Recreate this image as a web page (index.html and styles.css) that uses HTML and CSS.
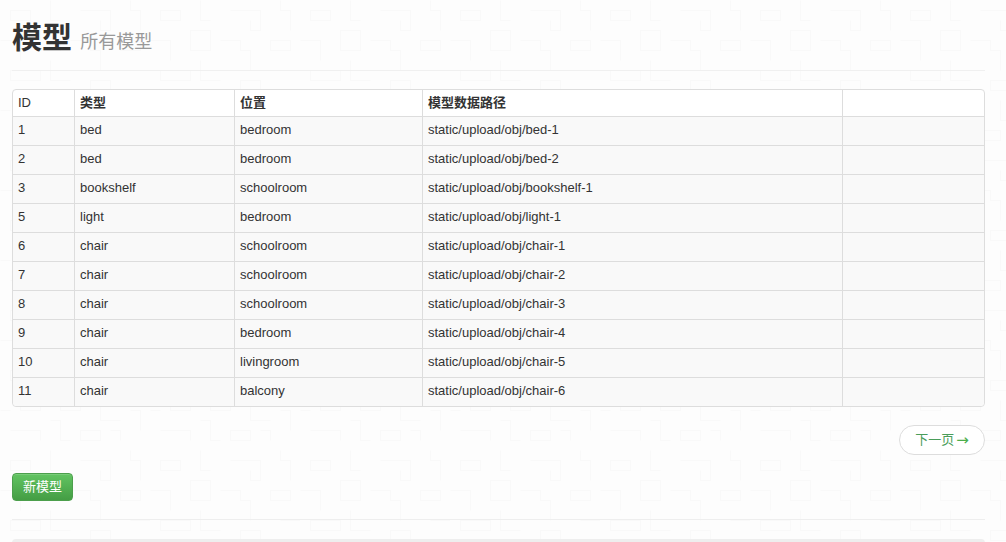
FILE: index.html
```html
<!DOCTYPE html>
<html lang="zh">
<head>
<meta charset="utf-8">
<title>模型</title>
<link rel="stylesheet" href="styles.css">
</head>
<body>
<main class="page">
  <header class="page-header">
    <h1>模型 <small>所有模型</small></h1>
  </header>
  <table class="models">
    <thead>
      <tr><th class="c-id">ID</th><th class="c-type">类型</th><th class="c-loc">位置</th><th class="c-path">模型数据路径</th><th class="c-act"></th></tr>
    </thead>
    <tbody>
      <tr><td>1</td><td>bed</td><td>bedroom</td><td>static/upload/obj/bed-1</td><td></td></tr>
      <tr><td>2</td><td>bed</td><td>bedroom</td><td>static/upload/obj/bed-2</td><td></td></tr>
      <tr><td>3</td><td>bookshelf</td><td>schoolroom</td><td>static/upload/obj/bookshelf-1</td><td></td></tr>
      <tr><td>5</td><td>light</td><td>bedroom</td><td>static/upload/obj/light-1</td><td></td></tr>
      <tr><td>6</td><td>chair</td><td>schoolroom</td><td>static/upload/obj/chair-1</td><td></td></tr>
      <tr><td>7</td><td>chair</td><td>schoolroom</td><td>static/upload/obj/chair-2</td><td></td></tr>
      <tr><td>8</td><td>chair</td><td>schoolroom</td><td>static/upload/obj/chair-3</td><td></td></tr>
      <tr><td>9</td><td>chair</td><td>bedroom</td><td>static/upload/obj/chair-4</td><td></td></tr>
      <tr><td>10</td><td>chair</td><td>livingroom</td><td>static/upload/obj/chair-5</td><td></td></tr>
      <tr><td>11</td><td>chair</td><td>balcony</td><td>static/upload/obj/chair-6</td><td></td></tr>
    </tbody>
  </table>
  <nav class="pager"><a class="next" href="#">下一页<span class="arrow">→</span></a></nav>
  <div class="actions"><a class="btn" href="#">新模型</a></div>
  <hr class="rule">
  <div class="footer-bar"></div>
</main>
</body>
</html>
```
FILE: styles.css
```css
* { box-sizing: border-box; }
html, body { height: 100%; }
body {
  margin: 0;
  overflow: hidden;
  color: #333;
  font: 13px/20px "Liberation Sans", "Noto Sans CJK SC", sans-serif;
  background-color: #fdfdfd;
  background-image: url("data:image/svg+xml,%3Csvg xmlns='http://www.w3.org/2000/svg' width='150' height='150' fill='none' stroke='%23f9f9f9'%3E%3Cpath d='M10.5 10.5h20v10h-20zM50.5 .5v20h10M80.5 10.5h30v20h-10v-10M130.5 .5v10h10v20M.5 40.5h20v20M40.5 30.5h20v20h-20zM70.5 40.5h20v10h10v20M120.5 40.5h20v10h-20zM10.5 70.5h30v10h-30zM50.5 60.5v20h20M90.5 80.5h20v10h-20zM130.5 70.5h20v20M20.5 90.5v20h20v-10M60.5 90.5h20v20h-20zM100.5 100.5v20h20M130.5 110.5h10v20M.5 110.5h10M10.5 130.5h30v10M50.5 120.5h10v20h10M80.5 130.5h20v10h-20zM110.5 130.5h10v10'/%3E%3C/svg%3E");
}
.page { padding: 0 21px 0 12px; }
.page-header {
  height: 71px;
  padding-top: 13px;
  border-bottom: 1px solid #f0f0f0;
}
h1 {
  margin: 0;
  font-size: 30px;
  line-height: 50px;
  font-weight: bold;
  color: #333;
}
h1 small {
  font-size: 18px;
  font-weight: normal;
  color: #999;
}
.models {
  width: 973px;
  margin-top: 18px;
  table-layout: fixed;
  border-collapse: separate;
  border-spacing: 0;
  background: #fff;
  border: 1px solid #ddd;
  border-radius: 4px;
}
.c-id { width: 61px; }
.c-type { width: 160px; }
.c-loc { width: 188px; }
.c-path { width: 420px; }
th, td {
  padding: 0 5px;
  text-align: left;
  border-left: 1px solid #ddd;
  border-top: 1px solid #ddd;
}
th:first-child, td:first-child { border-left: 0; }
thead th {
  height: 26px;
  border-top: 0;
  font-weight: bold;
  color: #333;
}
thead .c-id { font-weight: normal; }
tbody td { height: 29px; padding-bottom: 2px; background: #f9f9f9; }
tbody tr:last-child td:first-child { border-bottom-left-radius: 4px; }
tbody tr:last-child td:last-child { border-bottom-right-radius: 4px; }
.pager {
  display: flex;
  justify-content: flex-end;
  margin-top: 18px;
}
.next {
  display: flex;
  justify-content: center;
  align-items: center;
  gap: 2px;
  width: 86px;
  height: 30px;
  color: #4a9d5a;
  background: #fff;
  border: 1px solid #ddd;
  border-radius: 15px;
  text-decoration: none;
}
.arrow {
  font-family: "DejaVu Sans", sans-serif;
  font-size: 15px;
  color: #4cae4c;
}
.actions { margin-top: 18px; }
.btn {
  display: inline-block;
  width: 61px;
  height: 28px;
  line-height: 26px;
  text-align: center;
  color: #fff;
  font-size: 13px;
  text-decoration: none;
  background: linear-gradient(#62c462, #449d44);
  border: 1px solid #4c9f4c;
  border-radius: 4px;
  box-shadow: inset 0 1px 0 rgba(255, 255, 255, .15);
}
.rule {
  margin: 18px 0 0;
  border: 0;
  border-top: 1px solid #eee;
}
.footer-bar {
  height: 6px;
  margin-top: 19px;
  background: #eee;
  border-radius: 4px 4px 0 0;
}
```
